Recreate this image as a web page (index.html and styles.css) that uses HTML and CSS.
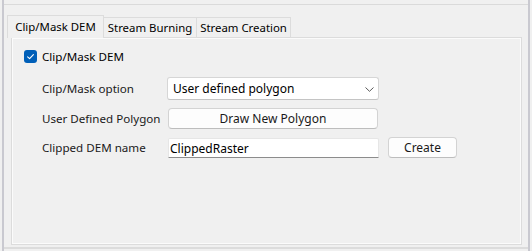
FILE: index.html
```html
<!DOCTYPE html>
<html>
<head>
<meta charset="utf-8">
<link rel="stylesheet" href="styles.css">
</head>
<body>
<div class="window">
  <div class="frame">
    <div class="tabstrip">
      <div class="tab tab-active t1">Clip/Mask DEM</div>
      <div class="tab t2">Stream Burning</div>
      <div class="tab t3">Stream Creation</div>
    </div>
    <div class="panel">
      <div class="check-row">
        <span class="checkbox">
          <svg width="13" height="13" viewBox="0 0 13 13"><path d="M3.6 6.8 L5.6 8.7 L9.4 4.6" fill="none" stroke="#ffffff" stroke-width="1.1" stroke-linecap="round" stroke-linejoin="round"/></svg>
        </span>
        <span class="check-label">Clip/Mask DEM</span>
      </div>
      <div class="form">
        <div class="label">Clip/Mask option</div>
        <div class="combo">
          <span>User defined polygon</span>
          <svg class="chev" width="9" height="5" viewBox="0 0 9 5"><path d="M0.5 0.5 L4.5 4.3 L8.5 0.5" fill="none" stroke="#5a5a5a" stroke-width="1"/></svg>
        </div>
        <div></div>

        <div class="label">User Defined Polygon</div>
        <div class="button wide">Draw New Polygon</div>
        <div></div>

        <div class="label">Clipped DEM name</div>
        <div class="textbox">ClippedRaster</div>
        <div class="button create">Create</div>
      </div>
    </div>
  </div>
</div>
</body>
</html>
```
FILE: styles.css
```css
html, body {
  margin: 0;
  padding: 0;
  background: #f0f0f0;
}
body {
  font-family: "Noto Sans", "Open Sans", sans-serif;
  font-size: 12px;
  color: #1a1a1a;
  width: 532px;
  height: 251px;
  overflow: hidden;
}
.window {
  box-sizing: border-box;
  margin-left: 2px;
  width: 528px;
  height: 251px;
  border-left: 2px solid #c9c9d0;
  border-right: 2px solid #c9c9d0;
  padding-top: 4px;
}
.frame {
  box-sizing: border-box;
  height: 245px;
  border-top: 1px solid #dadada;
  border-bottom: 2px solid #dcdcdc;
  padding-left: 3px;
}
.tabstrip {
  display: flex;
  align-items: flex-end;
  margin-top: 10px;
  height: 22px;
  position: relative;
  z-index: 2;
}
.tab {
  box-sizing: border-box;
  height: 20px;
  border: 1px solid #dcdcdc;
  border-bottom: none;
  border-left: none;
  background: #f0f0f0;
  display: flex;
  align-items: center;
  justify-content: center;
  color: #000;
  line-height: 1;
  font-size: 11.4px;
  white-space: nowrap;
}
.tab-active {
  height: 23px;
  margin-bottom: -1px;
  border-left: 1px solid #dcdcdc;
  background: #f0f0f0;
  padding-bottom: 1px;
}
.t1 { width: 97px; }
.t2 { width: 93px; }
.t3 { width: 94px; }
.panel {
  box-sizing: border-box;
  margin-left: 4px;
  width: 511px;
  height: 208px;
  border: 1px solid #dcdcdc;
  box-shadow: inset 1px 1px 0 #fbfbfb, inset -1px -1px 0 #fbfbfb;
  padding: 12px 0 0 12px;
  position: relative;
  z-index: 1;
}
.check-row {
  display: flex;
  align-items: center;
  height: 13px;
}
.checkbox {
  width: 13px;
  height: 13px;
  border-radius: 3px;
  background: #005fb8;
  display: block;
}
.checkbox svg { display: block; }
.check-label {
  margin-left: 5px;
  color: #000;
  line-height: 13px;
  font-size: 11.6px;
}
.form {
  margin-top: 14px;
  margin-left: 18px;
  display: grid;
  grid-template-columns: 117px 211px 69px;
  grid-template-rows: 23px 21px 21px;
  column-gap: 9px;
  row-gap: 8px;
  align-items: center;
}
.label {
  color: #1a1a1a;
  white-space: nowrap;
  font-size: 11.6px;
}
.combo {
  box-sizing: border-box;
  height: 23px;
  margin-left: -1px;
  width: 212px;
  background: #fff;
  border: 1px solid #d6d6d6;
  border-bottom-color: #c4c4c4;
  border-radius: 3px;
  display: flex;
  align-items: center;
  justify-content: space-between;
  padding: 0 4px 0 5px;
  color: #000;
}
.chev { display: block; margin-top: 1px; }
.button {
  box-sizing: border-box;
  height: 21px;
  background: #fdfdfd;
  border: 1px solid #d3d3d3;
  border-bottom-color: #bdbdbd;
  border-radius: 4px;
  display: flex;
  align-items: center;
  justify-content: center;
  color: #1a1a1a;
}
.wide { width: 210px; }
.textbox {
  box-sizing: border-box;
  height: 20px;
  background: #fff;
  border: 1px solid #e6e6e6;
  border-bottom: 1px solid #8c8c8c;
  border-radius: 2px 2px 0 0;
  display: flex;
  align-items: center;
  padding-left: 1px;
  color: #000;
  margin-top: 1px;
}
.create { width: 69px; }
```
